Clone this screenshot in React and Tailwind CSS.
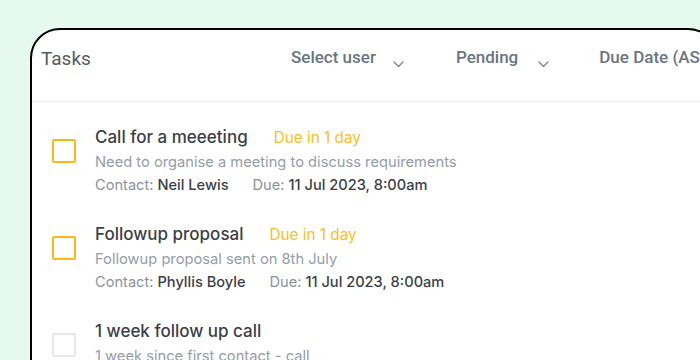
import React from 'react';

const tasks = [
  {
    id: 1,
    title: 'Call for a meeeting',
    badge: 'Due in 1 day',
    note: 'Need to organise a meeting to discuss requirements',
    contact: 'Neil Lewis',
    due: '11 Jul 2023, 8:00am',
    urgent: true,
  },
  {
    id: 2,
    title: 'Followup proposal',
    badge: 'Due in 1 day',
    note: 'Followup proposal sent on 8th July',
    contact: 'Phyllis Boyle',
    due: '11 Jul 2023, 8:00am',
    urgent: true,
  },
  {
    id: 3,
    title: '1 week follow up call',
    badge: '',
    note: '1 week since first contact - call',
    contact: 'Neil Lewis',
    due: '14 Jul 2023, 8:00am',
    urgent: false,
  },
];

const Chevron = () => (
  <svg width="11" height="7" viewBox="0 0 11 7" fill="none" className="mt-[16px] shrink-0">
    <path d="M1 1l4.5 4.5L10 1" stroke="#7b8590" strokeWidth="1.3" strokeLinecap="round" strokeLinejoin="round" />
  </svg>
);

const Filter = ({ label, gap }) => (
  <div className={`flex items-start shrink-0 ${gap}`}>
    <span className="text-[17px] leading-6 font-medium text-[#6b7580] whitespace-nowrap">{label}</span>
    <Chevron />
  </div>
);

const TaskRow = ({ task }) => (
  <div className="flex items-start gap-[19px]">
    <div
      className={`mt-[14px] w-6 h-6 shrink-0 rounded-[2px] border-2 ${
        task.urgent ? 'border-[#fdb913]' : 'border-[#e3e9ef]'
      }`}
    />
    <div className="flex flex-col">
      <div className="flex items-baseline gap-[26px]">
        <span className="text-[17px] leading-6 font-medium text-[#3b4048] whitespace-nowrap">{task.title}</span>
        {task.badge && (
          <span className="text-[15.3px] leading-5 text-[#fbbf24] whitespace-nowrap">{task.badge}</span>
        )}
      </div>
      <p className="mt-[3px] text-[14.7px] leading-5 text-[#949da7] whitespace-nowrap">{task.note}</p>
      <div className="mt-[3px] flex text-[14.6px] leading-5 whitespace-nowrap">
        <span className="text-[#8a939d]">
          Contact: <span className="font-medium text-[#3b4048]">{task.contact}</span>
        </span>
        <span className="ml-6 text-[#8a939d]">
          Due: <span className="font-medium text-[#3b4048]">{task.due}</span>
        </span>
      </div>
    </div>
  </div>
);

export default function App() {
  return (
    <div className="w-[700px] h-[360px] overflow-hidden bg-[#e6f9ef] pt-[28px] pl-[30px]">
      <div className="w-[688px] h-[400px] bg-white border-2 border-black rounded-[30px]">
        <div className="h-[73px] pt-[15px] pl-[9px] flex items-start border-b-[3px] border-[#f3f5f8] font-['Roboto',sans-serif]">
          <div className="w-[250px] shrink-0 text-[19px] leading-7 text-[#535b64]">Tasks</div>
          <Filter label="Select user" gap="gap-[17px] mr-[52px]" />
          <Filter label="Pending" gap="gap-[20px] mr-[50px]" />
          <Filter label="Due Date (ASC)" gap="gap-[17px]" />
        </div>
        <div className="pt-[22px] pl-5 flex flex-col gap-[27px] font-['Inter',sans-serif]">
          {tasks.map((task) => (
            <TaskRow key={task.id} task={task} />
          ))}
        </div>
      </div>
    </div>
  );
}
